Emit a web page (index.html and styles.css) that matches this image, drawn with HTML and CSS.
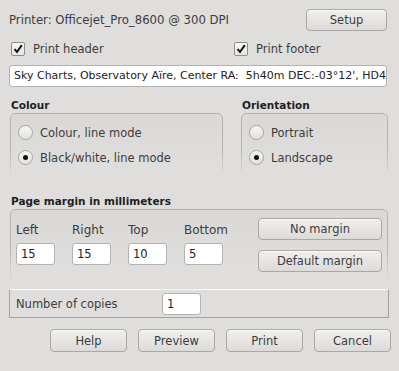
FILE: index.html
```html
<!DOCTYPE html>
<html lang="en">

<head>
    <meta charset="UTF-8">
    <title>Print</title>
    <link rel="stylesheet" href="styles.css">
</head>

<body>
    <div class="dialog">
        <div class="top-row">
            <span class="printer-name">Printer: Officejet_Pro_8600 @ 300 DPI</span>
            <button class="btn setup-btn">Setup</button>
        </div>

        <div class="check-row">
            <label class="check header-check">
                <span class="checkbox">
                    <svg width="12" height="12" viewBox="0 0 12 12"><path d="M2.5 6.2 L5 9 L9.8 2.2" fill="none" stroke="#111" stroke-width="2"/></svg>
                </span>
                Print header
            </label>
            <label class="check">
                <span class="checkbox">
                    <svg width="12" height="12" viewBox="0 0 12 12"><path d="M2.5 6.2 L5 9 L9.8 2.2" fill="none" stroke="#111" stroke-width="2"/></svg>
                </span>
                Print footer
            </label>
        </div>

        <div class="text-field">Sky Charts, Observatory Aïre, Center RA:&nbsp; 5h40m DEC:-03°12', HD42345 Field 10°</div>

        <div class="options">
            <div class="group colour-group">
                <div class="group-title">Colour</div>
                <div class="group-box radio-box">
                    <div class="radio-item"><span class="radio"></span>Colour, line mode</div>
                    <div class="radio-item"><span class="radio checked"></span>Black/white, line mode</div>
                </div>
            </div>
            <div class="group orient-group">
                <div class="group-title">Orientation</div>
                <div class="group-box radio-box">
                    <div class="radio-item"><span class="radio"></span>Portrait</div>
                    <div class="radio-item"><span class="radio checked"></span>Landscape</div>
                </div>
            </div>
        </div>

        <div class="group margin-group">
            <div class="group-title">Page margin in millimeters</div>
            <div class="group-box margin-box">
                <div class="margin-fields">
                    <div class="field">
                        <span class="field-label">Left</span>
                        <span class="num-input">15</span>
                    </div>
                    <div class="field">
                        <span class="field-label">Right</span>
                        <span class="num-input">15</span>
                    </div>
                    <div class="field">
                        <span class="field-label">Top</span>
                        <span class="num-input">10</span>
                    </div>
                    <div class="field">
                        <span class="field-label">Bottom</span>
                        <span class="num-input">5</span>
                    </div>
                </div>
                <div class="margin-buttons">
                    <button class="btn wide-btn">No margin</button>
                    <button class="btn wide-btn">Default margin</button>
                </div>
            </div>
        </div>

        <div class="copies-box">
            <span class="copies-label">Number of copies</span>
            <span class="num-input">1</span>
        </div>

        <div class="button-row">
            <button class="btn">Help</button>
            <button class="btn">Preview</button>
            <button class="btn">Print</button>
            <button class="btn">Cancel</button>
        </div>
    </div>
</body>

</html>
```

FILE: styles.css
```css
* {
    margin: 0;
    padding: 0;
    box-sizing: border-box;
}

body {
    width: 399px;
    height: 371px;
    overflow: hidden;
    background-color: #dfdedd;
    color: #3c3c3c;
    font-family: 'DejaVu Sans', sans-serif;
    font-size: 11.5px;
}

.dialog {
    padding: 9px 11px 0 9px;
}

/* buttons */
.btn {
    font-family: inherit;
    font-size: 11.5px;
    color: #3c3c3c;
    height: 23px;
    width: 77px;
    border: 1px solid #a9a8a7;
    border-radius: 4px;
    background: linear-gradient(#f0efee, #dcdbda);
    box-shadow: inset 0 1px 0 #fbfbfa;
}

.top-row {
    display: flex;
    justify-content: space-between;
    align-items: center;
    height: 22px;
}

.printer-name {
    font-size: 11.7px;
}

.setup-btn {
    width: 81px;
    height: 22px;
    margin-right: 1px;
}

/* checkboxes */
.check-row {
    display: flex;
    margin-top: 10px;
    height: 15px;
}

.check {
    display: flex;
    align-items: center;
    gap: 8px;
}

.header-check {
    width: 225px;
    padding-left: 2px;
}

.checkbox {
    width: 14px;
    height: 14px;
    border: 1px solid #8e8d8c;
    border-radius: 2px;
    background: linear-gradient(#fafaf9, #e6e5e4);
    display: flex;
    align-items: center;
    justify-content: center;
}

.text-field {
    margin-top: 9px;
    height: 22px;
    width: 378px;
    padding: 0 4px;
    font-size: 11px;
    line-height: 20px;
    background-color: #fff;
    border: 1px solid #b3b2b1;
    border-radius: 3px;
    white-space: nowrap;
    overflow: hidden;
    color: #222;
}

/* group boxes */
.options {
    display: flex;
    margin-top: 11px;
    gap: 18px;
    padding-left: 1px;
}

.colour-group {
    width: 213px;
}

.orient-group {
    width: 147px;
}

.group-title {
    font-weight: bold;
    font-size: 10.5px;
    color: #1e1e1e;
    height: 14px;
    line-height: 14px;
    margin-left: 1px;
    margin-bottom: 1px;
}

.group-box {
    position: relative;
    border-radius: 5px;
    background: linear-gradient(#d9d8d7, #dfdedd 80%);
}

.group-box::before {
    content: "";
    position: absolute;
    inset: 0;
    border: 1px solid #b4b3b2;
    border-radius: 5px;
    -webkit-mask-image: linear-gradient(#000 55%, transparent);
    mask-image: linear-gradient(#000 55%, transparent);
}

.radio-box {
    padding: 12px 8px 11px;
    display: flex;
    flex-direction: column;
    gap: 10px;
}

.radio-item {
    display: flex;
    align-items: center;
    gap: 7px;
    height: 15px;
}

.radio {
    width: 15px;
    height: 15px;
    border-radius: 50%;
    border: 1px solid #a6a5a4;
    background: linear-gradient(#f6f6f5, #e2e1e0);
    display: flex;
    align-items: center;
    justify-content: center;
}

.radio.checked::after {
    content: "";
    width: 5px;
    height: 5px;
    border-radius: 50%;
    background-color: #111;
}

.margin-group {
    margin-top: 18px;
    margin-left: 1px;
    width: 378px;
}

.margin-box {
    display: flex;
    justify-content: space-between;
    padding: 9px 6px 9px 6px;
}

.margin-fields {
    display: flex;
    padding-top: 5px;
}

.field {
    width: 56px;
    display: flex;
    flex-direction: column;
}

.field-label {
    height: 15px;
    line-height: 15px;
    font-size: 12px;
}

.num-input {
    display: block;
    margin-top: 5px;
    width: 39px;
    height: 22px;
    padding-left: 4px;
    line-height: 20px;
    background-color: #fff;
    border: 1px solid #b3b2b1;
    border-radius: 3px;
    color: #222;
}

.margin-buttons {
    display: flex;
    flex-direction: column;
    gap: 10px;
}

.wide-btn {
    width: 124px;
    height: 22px;
}

/* copies */
.copies-box {
    margin-top: 8px;
    width: 380px;
    height: 29px;
    display: flex;
    align-items: center;
    padding-left: 6px;
    border: 1px solid #a3a2a1;
    border-top-color: #f6f6f5;
}

.copies-label {
    width: 146px;
}

.copies-box .num-input {
    margin-top: 0;
}

.button-row {
    display: flex;
    justify-content: flex-end;
    gap: 11px;
    margin-top: 11px;
    margin-right: -3px;
}
```
